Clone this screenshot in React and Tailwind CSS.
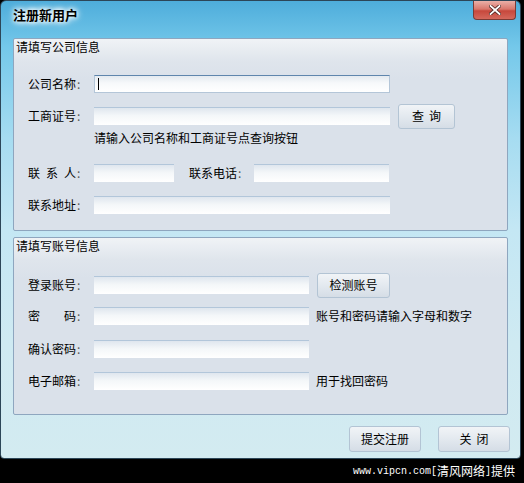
import React from "react";

const FONT = { fontFamily: '"Noto Sans CJK SC", "Noto Sans", sans-serif' };

function Label({ chars, spread }) {
  return (
    <div className="flex w-[80px] shrink-0 items-center whitespace-nowrap pl-[14px]">
      {spread ? (
        <div className="flex w-[48px] justify-between">
          {chars.split("").map((c, i) => (
            <span key={i}>{c}</span>
          ))}
        </div>
      ) : (
        <span>{chars}</span>
      )}
      <span className="ml-[1px] text-[#555]">:</span>
    </div>
  );
}

function Input({ w, focused }) {
  if (focused) {
    return (
      <div
        className="relative h-[18px] shrink-0 border border-[#b4c6d8] border-t-[#5f86ad] bg-[linear-gradient(180deg,#e4eaf0_0%,#f7f9fb_45%,#ffffff_100%)]"
        style={{ width: w }}
      >
        <div className="absolute left-[3px] top-[2px] h-[12px] w-[1px] bg-black" />
      </div>
    );
  }
  return (
    <div
      className="h-[18px] shrink-0 border-t border-[#b2c6da] bg-[linear-gradient(180deg,#dfe6ee_0%,#f4f7f9_45%,#ffffff_100%)]"
      style={{ width: w }}
    />
  );
}

function Btn({ children, w, h }) {
  return (
    <div
      className="flex shrink-0 items-center justify-center whitespace-nowrap rounded-[3px] border border-[#b3c4d4] bg-[linear-gradient(180deg,#f1f4f7_0%,#e3e9ef_50%,#d5dde6_100%)] text-[12px] text-black"
      style={{ width: w, height: h }}
    >
      {children}
    </div>
  );
}

function Row({ mt, children }) {
  return (
    <div className="flex h-[18px] items-center whitespace-nowrap" style={{ marginTop: mt }}>
      {children}
    </div>
  );
}

function Group({ title, children, className }) {
  return (
    <div
      className={
        "mx-[12px] rounded-[2px] border border-[#8ea6bf] bg-[linear-gradient(180deg,#f0f3f6_0px,#dfe5ec_22px,#dae1ea_40px,#dae1ea_100%)] " +
        (className || "")
      }
    >
      <div className="h-[16px] pl-[2px] text-[12px] leading-[16px] text-black">{title}</div>
      {children}
    </div>
  );
}

export default function App() {
  return (
    <div className="flex h-[483px] w-[524px] flex-col bg-black text-[12px] text-black" style={FONT}>
      <div className="relative flex h-[459px] w-[521px] shrink-0 flex-col rounded-t-[6px] rounded-b-[4px] border border-[#2c4658] bg-[linear-gradient(180deg,#4eaddb_0%,#74c8ea_10%,#a6dcf1_30%,#c4e7f4_50%,#cfeaf2_75%,#d3ebf1_100%)]">
        {/* title bar */}
        <div className="flex h-[37px] items-start">
          <div
            className="ml-[12px] mt-[5px] text-[13px] font-bold leading-[18px] text-black"
            style={{ textShadow: "0 0 4px #fff, 0 0 6px #fff, 0 0 8px #fff" }}
          >
            注册新用户
          </div>
          <div className="ml-auto mr-[4px] flex h-[19px] w-[43px] items-center justify-center rounded-b-[4px] border border-t-0 border-[#7a3a34] bg-[linear-gradient(180deg,#eab0a8_0%,#d9776c_45%,#c7483c_55%,#d4685c_100%)]">
            <svg width="12" height="10" viewBox="0 0 12 10">
              <path d="M1.5 1 L10.5 9 M10.5 1 L1.5 9" stroke="#4a2420" strokeWidth="3.4" strokeLinecap="square" />
              <path d="M1.5 1 L10.5 9 M10.5 1 L1.5 9" stroke="#ffffff" strokeWidth="1.8" strokeLinecap="square" />
            </svg>
          </div>
        </div>

        <Group title="请填写公司信息" className="h-[193px]">
          <Row mt={20}>
            <Label chars="公司名称" />
            <Input w={296} focused />
          </Row>
          <Row mt={14}>
            <Label chars="工商证号" />
            <Input w={296} />
            <div className="w-[8px]" />
            <Btn w={57} h={25}>
              <span>查</span>
              <span className="ml-[5px]">询</span>
            </Btn>
          </Row>
          <div className="mt-[6px] h-[14px] pl-[80px] leading-[14px]">请输入公司名称和工商证号点查询按钮</div>
          <Row mt={19}>
            <Label chars="联系人" spread />
            <Input w={80} />
            <div className="w-[15px]" />
            <div className="flex w-[65px] shrink-0">
              <span>联系电话</span>
              <span className="ml-[1px] text-[#555]">:</span>
            </div>
            <Input w={135} />
          </Row>
          <Row mt={14}>
            <Label chars="联系地址" />
            <Input w={296} />
          </Row>
        </Group>

        <Group title="请填写账号信息" className="mt-[6px] h-[178px]">
          <Row mt={22}>
            <Label chars="登录账号" />
            <Input w={215} />
            <div className="w-[8px]" />
            <Btn w={73} h={25}>检测账号</Btn>
          </Row>
          <Row mt={13}>
            <Label chars="密码" spread />
            <Input w={215} />
            <span className="ml-[7px]">账号和密码请输入字母和数字</span>
          </Row>
          <Row mt={15}>
            <Label chars="确认密码" />
            <Input w={215} />
          </Row>
          <Row mt={14}>
            <Label chars="电子邮箱" />
            <Input w={215} />
            <span className="ml-[7px]">用于找回密码</span>
          </Row>
        </Group>

        <div className="mt-[11px] flex justify-end gap-[17px] pr-[10px]">
          <Btn w={72} h={26}>提交注册</Btn>
          <Btn w={72} h={26}>
            <span>关</span>
            <span className="ml-[5px]">闭</span>
          </Btn>
        </div>
      </div>
      <div className="flex h-[24px] items-center justify-end whitespace-nowrap pr-[9px] text-white">
        <span className="text-[10px]" style={{ fontFamily: '"Liberation Mono", monospace' }}>
          www.vipcn.com[
        </span>
        <span className="text-[12px]">清风网络</span>
        <span className="text-[10px]" style={{ fontFamily: '"Liberation Mono", monospace' }}>
          ]
        </span>
        <span className="text-[12px]">提供</span>
      </div>
    </div>
  );
}
